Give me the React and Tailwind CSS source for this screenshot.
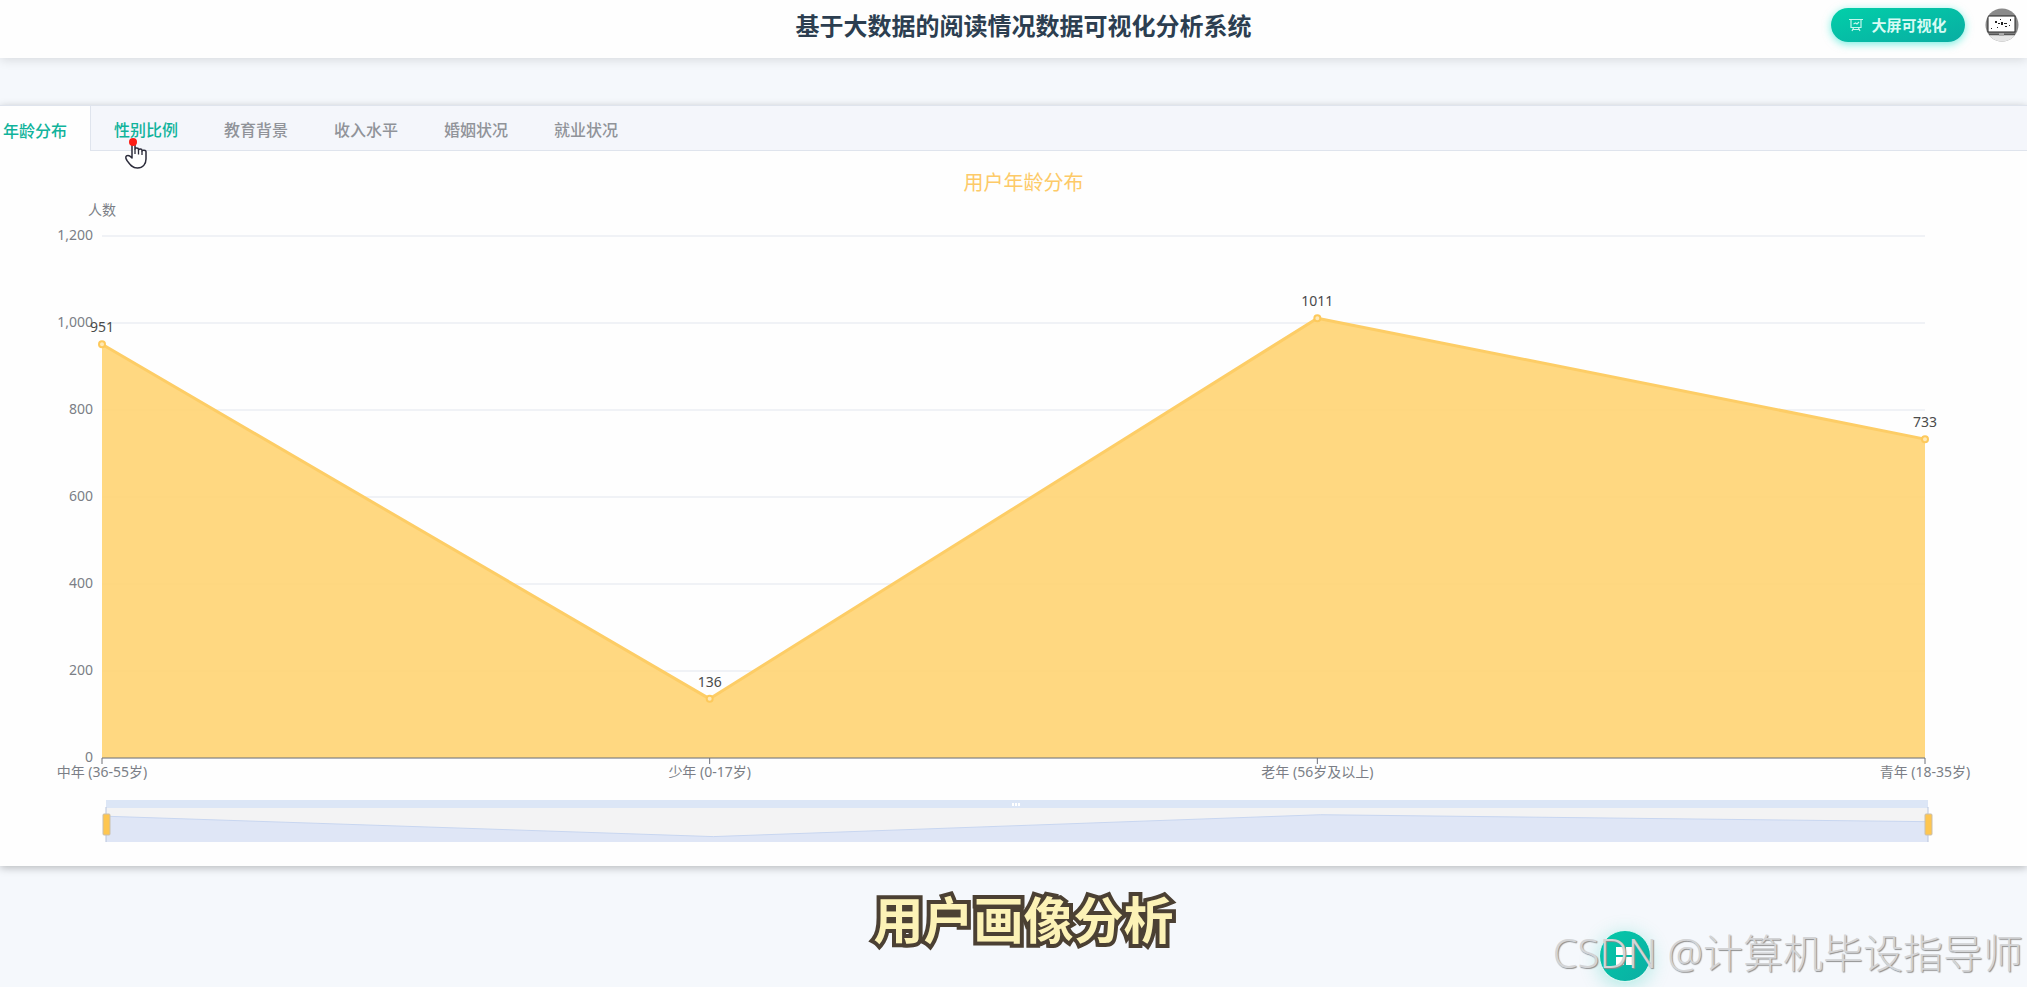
const tabs = ["年龄分布", "性别比例", "教育背景", "收入水平", "婚姻状况", "就业状况"];

const ages = [
  { name: "中年 (36-55岁)", count: 951 },
  { name: "少年 (0-17岁)", count: 136 },
  { name: "老年 (56岁及以上)", count: 1011 },
  { name: "青年 (18-35岁)", count: 733 },
];

const ticks = [1200, 1000, 800, 600, 400, 200, 0];
const MAX = 1200;
const PLOT_H = 522;

const yOf = (value) => PLOT_H - (value / MAX) * PLOT_H;
const xOf = (i) => `${(i / (ages.length - 1)) * 100}%`;

function Header() {
  return (
    <header className="relative z-10 grid h-[58px] grid-cols-[1fr_auto_1fr] items-start bg-[#fefefe] pl-5 shadow-[0_2px_10px_rgba(0,0,0,0.12)]">
      <div />
      <h1 className="pt-2 text-2xl leading-9 font-bold text-[#2c3e50]">
        基于大数据的阅读情况数据可视化分析系统
      </h1>
      <div className="flex items-center justify-end gap-5 pt-2 pr-2">
        <button className="flex h-[34px] w-[134px] items-center justify-center gap-2 rounded-full bg-linear-to-br from-[#02cfa9] to-[#09ada2] text-[15px] font-bold text-[#d8fbf4] shadow-[0_2px_8px_rgba(0,225,200,0.55)]">
          <BoardIcon />
          大屏可视化
        </button>
        <Avatar />
      </div>
    </header>
  );
}

function BoardIcon() {
  return (
    <svg width="14" height="14" viewBox="0 0 14 14" fill="none" stroke="#c4f7ec" strokeWidth="1.2">
      <path d="M0 1.5H14M2 1.5V9.5H12V1.5M4.5 6L6.5 5L8 6L10 4M4.500 10L3 13M9.500 10L11 13M3.500 11.500H10.500" />
    </svg>
  );
}

function Avatar() {
  return (
    <svg width="34" height="34" viewBox="0 0 34 34" role="img" aria-label="头像">
      <defs>
        <clipPath id="avatarClip">
          <circle cx="17" cy="17" r="16.5" />
        </clipPath>
      </defs>
      <g clipPath="url(#avatarClip)">
        <rect width="34" height="34" fill="#8a8a8a" />
        <rect y="27" width="34" height="7" fill="#e6e6e6" />
        <rect x="3" y="8" width="27" height="16" fill="#fff" stroke="#222" strokeWidth="1" />
        <path d="M10 13h2v2h-2zM13 15h2v1h-2zM16 14h2v3h-2zM19 15h3v1h-3zM12 19h1v1h-1zM20 18h2v1h-2zM25 11h1v2h-1zM6 20h1v1h-1zM15 11h1v1h-1zM24 17h1v1h-1z" fill="#222" />
        <path d="M4 26.500h10M19 26.500h11" stroke="#555" strokeWidth="1.500" />
        <path d="M14 25h5v3h-5z" fill="#aaa" />
      </g>
    </svg>
  );
}

function Tabs() {
  return (
    <nav className="flex h-[46px] border-y border-[#dfe4ed] bg-[#f4f6fb]">
      <div role="tablist" className="-ml-5 flex">
        {tabs.map((tab, i) => (
          <button
            key={tab}
            role="tab"
            aria-selected={i === 0}
            className={
              i === 0
                ? "-mb-px border-r border-[#dfe4ed] bg-[#fefefe] px-[23px] pt-1 text-base font-medium text-[#10b39b]"
                : i === 1
                  ? "px-[23px] pt-1 text-base font-medium text-[#10b39b]"
                  : "px-[23px] pt-1 text-base font-medium text-[#909399]"
            }
          >
            {tab}
          </button>
        ))}
      </div>
    </nav>
  );
}

function AreaChart() {
  const line = ages.map((a, i) => `${i},${yOf(a.count)}`).join(" ");

  return (
    <svg className="block h-[544px] w-full overflow-visible text-sm" role="img" aria-label="用户年龄分布">
      {/* Grid and value axis */}
      {ticks.map((t) => (
        <g key={t}>
          <line x1="0" x2="100%" y1={yOf(t)} y2={yOf(t)} stroke="#e2e6ee" />
          <text x="-9" y={yOf(t) + 4} textAnchor="end" fill="#7b7e86">
            {t.toLocaleString("en-US")}
          </text>
        </g>
      ))}
      <text x="0" y="-21" textAnchor="middle" fill="#7b7e86">
        人数
      </text>

      {/* Area */}
      <svg width="100%" height={PLOT_H} viewBox={`0 0 3 ${PLOT_H}`} preserveAspectRatio="none" overflow="visible">
        <polygon points={`0,${PLOT_H} ${line} 3,${PLOT_H}`} fill="#ffd370" fillOpacity="0.88" />
        <polyline points={line} fill="none" stroke="#fdcd66" strokeWidth="3" strokeLinejoin="bevel" vectorEffect="non-scaling-stroke" />
      </svg>

      {/* Category axis */}
      <line x1="0" x2="100%" y1={PLOT_H} y2={PLOT_H} stroke="#6e7079" />
      {ages.map((a, i) => (
        <g key={a.name}>
          <line x1={xOf(i)} x2={xOf(i)} y1={PLOT_H} y2={PLOT_H + 6} stroke="#6e7079" />
          <text x={xOf(i)} y={PLOT_H + 19} textAnchor="middle" fill="#7b7e86">
            {a.name}
          </text>
          <circle cx={xOf(i)} cy={yOf(a.count)} r="3" fill="#ffe9b5" stroke="#fdc95c" strokeWidth="2" />
          <text x={xOf(i)} y={yOf(a.count) - 12} textAnchor="middle" fill="#4a4a4a">
            {a.count}
          </text>
        </g>
      ))}
    </svg>
  );
}

function ZoomSlider() {
  const line = ages.map((a, i) => `${i},${32 - (a.count / MAX) * 30}`).join(" ");

  return (
    <svg className="block h-[42px] w-full overflow-visible">
      <rect width="100%" height="42" fill="#f3f3f4" />
      <rect width="100%" height="8" fill="#dce6f6" />
      <svg y="8" width="100%" height="34" viewBox="0 0 3 34" preserveAspectRatio="none">
        <polygon points={`0,34 ${line} 3,34`} fill="#dfe6f6" />
        <polyline points={line} fill="none" stroke="#c8d6f0" vectorEffect="non-scaling-stroke" />
      </svg>
      {/* Move grip */}
      <svg x="50%" overflow="visible">
        <path d="M-4 3v3M-1 3v3M2 3v3" stroke="#fff" strokeWidth="2" />
      </svg>
      {["0%", "100%"].map((x) => (
        <svg key={x} x={x} overflow="visible">
          <line y1="7" y2="42" stroke="#b8c4dc" />
          <rect x="-3" y="14" width="7" height="21" rx="1" fill="#fec650" stroke="#c9bfae" />
        </svg>
      ))}
    </svg>
  );
}

function HandCursor() {
  return (
    <svg className="pointer-events-none absolute top-[137px] left-[122px]" width="28" height="34" viewBox="0 0 28 34">
      <path
        d="M10 7C10 5.500 13 5.500 13 7V12C13 10.500 16.500 10.500 16.500 12.200V13C16.500 11.600 20 11.600 20 13.200V14C20 12.800 24 12.800 24 14.500V22C24 27 21 31 15.500 31C10 31 7.500 27 5 23.500C3 20.500 3.500 18.500 6 18.500C8 18.500 9 20 10 21Z"
        fill="#fff"
        stroke="#2b2b3a"
        strokeWidth="1.500"
        strokeLinejoin="round"
      />
      <path d="M13 12V17M16.500 13V17.500M20 14V18" stroke="#2b2b3a" strokeWidth="1.300" />
      <circle cx="11" cy="5" r="4" fill="#fb1d15" />
    </svg>
  );
}

export default function App() {
  return (
    <div className="relative flex min-h-screen flex-col overflow-hidden bg-[#f5f8fc] font-['Noto_Sans','Noto_Sans_CJK_SC',sans-serif]">
      <Header />

      <main className="pt-[47px]">
        <section className="bg-[#fefefe] pb-6 shadow-[0_2px_8px_rgba(0,0,0,0.25)]">
          <Tabs />
          <h2 className="pt-[17px] pb-[38px] pl-5 text-center text-xl leading-[30px] text-[#fdca68]">
            用户年龄分布
          </h2>
          <div className="px-[102px]">
            <AreaChart />
          </div>
          <div className="pt-5 pr-[99px] pl-[106px]">
            <ZoomSlider />
          </div>
        </section>
      </main>

      <p className="pt-[18px] pl-5 text-center text-[50px] leading-[72px] font-bold text-[#fcf2b6] [-webkit-text-stroke:8px_#4b4033] [paint-order:stroke_fill]">
        用户画像分析
      </p>

      <button
        aria-label="菜单"
        className="absolute right-[376px] bottom-[5px] flex size-[52px] items-center justify-center rounded-full border border-[#d5f7f0] bg-linear-to-br from-[#04c9a8] to-[#0aaea3] shadow-[0_4px_20px_rgba(0,200,170,0.3)]"
      >
        <svg width="18" height="18" viewBox="0 0 18 18" fill="#fff">
          <path d="M0 0h8v8H0zM10 0h8v8h-8zM0 10h8v8H0zM10 10h8v8h-8z" />
        </svg>
      </button>
      <p className="pointer-events-none absolute right-1 bottom-1 text-[40px] leading-[60px] font-light whitespace-nowrap text-[#d3d4d6] [text-shadow:1px_1px_1px_#8f8f8f]">
        CSDN @计算机毕设指导师
      </p>

      <HandCursor />
    </div>
  );
}
